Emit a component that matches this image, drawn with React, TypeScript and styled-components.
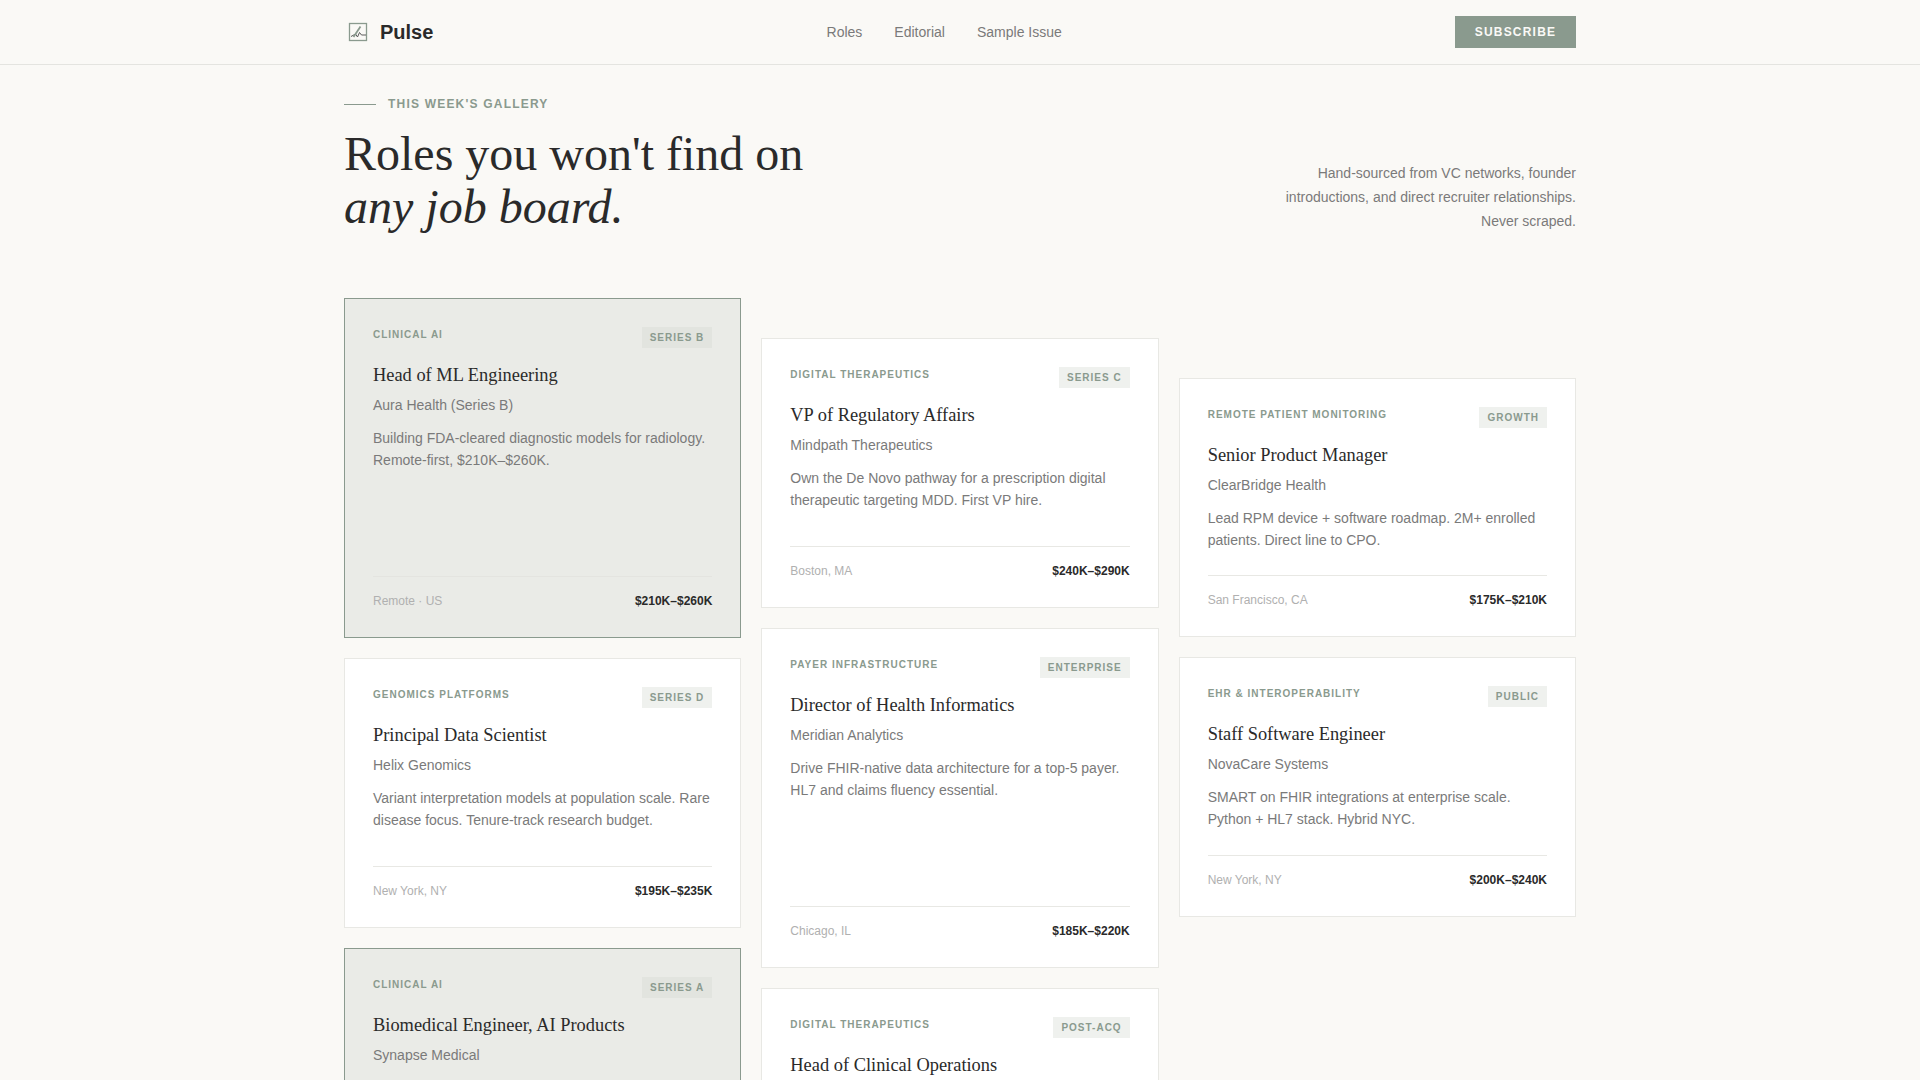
import React from "react";
import styled, { createGlobalStyle } from "styled-components";

const Global = createGlobalStyle`
  html, body { margin: 0; padding: 0; background: #faf9f6; }
  body { font-family: "Liberation Sans", Arial, sans-serif; color: #2a2a2a; }
  * { box-sizing: border-box; }
`;
const Header = styled.header`
  height: 65px;
  border-bottom: 1px solid #e4e4e0;
`;
const HeaderInner = styled.div`
  width: 1232px;
  height: 64px;
  margin: 0 auto;
  display: flex;
  justify-content: space-between;
  align-items: center;
`;
const Brand = styled.div`
  display: flex;
  align-items: center;
  gap: 12px;
  padding-left: 4px;
  font-size: 20px;
  font-weight: 700;
  color: #2a2a2a;
`;
const Nav = styled.nav`
  display: flex;
  gap: 32px;
  font-size: 14px;
  color: #7a7a7a;
`;
const Subscribe = styled.button`
  height: 32px;
  width: 121px;
  border: 0;
  padding: 0;
  background: #8a9a8e;
  color: #faf9f6;
  font: 700 12px "Liberation Sans", Arial, sans-serif;
  letter-spacing: 1.2px;
`;
const Main = styled.main`
  width: 1232px;
  margin: 0 auto;
`;
const Hero = styled.section`
  display: flex;
  justify-content: space-between;
  align-items: flex-end;
  padding-top: 32px;
  margin-bottom: 65px;
`;
const Eyebrow = styled.div`
  display: flex;
  align-items: center;
  gap: 12px;
  font-size: 12px;
  font-weight: 700;
  letter-spacing: 1.2px;
  color: #8a9a8e;
  height: 14px;
  margin-bottom: 16px;
  &::before { content: ""; width: 32px; height: 1px; background: #8a9a8e; }
`;
const Title = styled.h1`
  margin: 0;
  font: 400 48px/53px "Liberation Serif", "Times New Roman", serif;
  color: #2a2a2a;
  em { font-style: italic; }
`;
const Lead = styled.p`
  margin: 0;
  width: 320px;
  text-align: right;
  font-size: 14px;
  line-height: 24px;
  color: #7a7a7a;
`;
const Columns = styled.div`
  display: grid;
  grid-template-columns: repeat(3, 1fr);
  gap: 20px;
  align-items: start;
`;
const Column = styled.div<{ $offset: number }>`
  display: flex;
  flex-direction: column;
  gap: 20px;
  padding-top: ${(p) => p.$offset}px;
`;
const Card = styled.article<{ $featured?: boolean; $height: number }>`
  display: flex;
  flex-direction: column;
  min-height: ${(p) => p.$height}px;
  padding: 28px;
  background: ${(p) => (p.$featured ? "#eaebe7" : "#ffffff")};
  border: 1px solid ${(p) => (p.$featured ? "#8a9a8e" : "#e8e8e4")};
`;
const CardTop = styled.div`
  display: flex;
  justify-content: space-between;
  align-items: flex-start;
  margin-bottom: 16px;
`;
const Category = styled.span`
  font-size: 10px;
  font-weight: 700;
  letter-spacing: 1px;
  line-height: 15px;
  color: #8a9a8e;
`;
const Stage = styled.span<{ $featured?: boolean }>`
  font-size: 10px;
  font-weight: 700;
  letter-spacing: 1px;
  line-height: 13px;
  padding: 4px 8px;
  color: #8a9a8e;
  background: ${(p) => (p.$featured ? "#e2e4df" : "#eff1ee")};
`;
const RoleTitle = styled.h3`
  margin: 0 0 8px;
  font: 400 18.4px/23px "Liberation Serif", "Times New Roman", serif;
  color: #2a2a2a;
`;
const Company = styled.div`
  font-size: 14px;
  line-height: 21px;
  color: #7a7a7a;
  margin-bottom: 11px;
`;
const Desc = styled.p`
  margin: 0;
  flex: 1;
  font-size: 14px;
  line-height: 22.4px;
  color: #7a7a7a;
`;
const Foot = styled.div<{ $featured?: boolean }>`
  display: flex;
  justify-content: space-between;
  align-items: center;
  margin-top: 23px;
  padding-top: 17px;
  border-top: 1px solid ${(p) => (p.$featured ? "#e4e4e0" : "#e8e8e4")};
`;
const Place = styled.span`
  font-size: 12px;
  line-height: 15px;
  color: #b0b0b0;
`;
const Pay = styled.span`
  font-size: 12px;
  line-height: 15px;
  font-weight: 700;
  color: #2a2a2a;
`;

type Job = {
  cat: string; stage: string; title: string; company: string; desc: string;
  place: string; pay: string; featured?: boolean; height: number;
};
const cols: { offset: number; jobs: Job[] }[] = [
  {
    offset: 0,
    jobs: [
      { cat: "CLINICAL AI", stage: "SERIES B", title: "Head of ML Engineering", company: "Aura Health (Series B)", desc: "Building FDA-cleared diagnostic models for radiology. Remote-first, $210K–$260K.", place: "Remote · US", pay: "$210K–$260K", featured: true, height: 340 },
      { cat: "GENOMICS PLATFORMS", stage: "SERIES D", title: "Principal Data Scientist", company: "Helix Genomics", desc: "Variant interpretation models at population scale. Rare disease focus. Tenure-track research budget.", place: "New York, NY", pay: "$195K–$235K", height: 270 },
      { cat: "CLINICAL AI", stage: "SERIES A", title: "Biomedical Engineer, AI Products", company: "Synapse Medical", desc: "Bridge clinical workflows and model development for imaging products.", place: "Remote · US", pay: "$170K–$205K", featured: true, height: 340 },
    ],
  },
  {
    offset: 40,
    jobs: [
      { cat: "DIGITAL THERAPEUTICS", stage: "SERIES C", title: "VP of Regulatory Affairs", company: "Mindpath Therapeutics", desc: "Own the De Novo pathway for a prescription digital therapeutic targeting MDD. First VP hire.", place: "Boston, MA", pay: "$240K–$290K", height: 270 },
      { cat: "PAYER INFRASTRUCTURE", stage: "ENTERPRISE", title: "Director of Health Informatics", company: "Meridian Analytics", desc: "Drive FHIR-native data architecture for a top-5 payer. HL7 and claims fluency essential.", place: "Chicago, IL", pay: "$185K–$220K", height: 340 },
      { cat: "DIGITAL THERAPEUTICS", stage: "POST-ACQ", title: "Head of Clinical Operations", company: "Calmwave", desc: "Run clinical programs across a newly combined product portfolio.", place: "Remote · US", pay: "$190K–$230K", height: 270 },
    ],
  },
  {
    offset: 80,
    jobs: [
      { cat: "REMOTE PATIENT MONITORING", stage: "GROWTH", title: "Senior Product Manager", company: "ClearBridge Health", desc: "Lead RPM device + software roadmap. 2M+ enrolled patients. Direct line to CPO.", place: "San Francisco, CA", pay: "$175K–$210K", height: 259 },
      { cat: "EHR & INTEROPERABILITY", stage: "PUBLIC", title: "Staff Software Engineer", company: "NovaCare Systems", desc: "SMART on FHIR integrations at enterprise scale. Python + HL7 stack. Hybrid NYC.", place: "New York, NY", pay: "$200K–$240K", height: 260 },
    ],
  },
];

const Logo = () => (
  <svg width="20" height="20" viewBox="0 0 20 20" fill="none">
    <rect x="1.5" y="1.5" width="17" height="17" stroke="#8a9a8e" strokeWidth="1.3" />
    <path d="M3 14.5 L7.5 12 L9.5 15 L11.5 10.5 L13.5 13 H18" stroke="#5a5a5a" strokeWidth="1" />
    <path d="M5.5 15 L12.5 4.5" stroke="#8a9a8e" strokeWidth="1.8" />
  </svg>
);

export default function App() {
  return (
    <>
      <Global />
      <Header>
        <HeaderInner>
          <Brand><Logo />Pulse</Brand>
          <Nav><span>Roles</span><span>Editorial</span><span>Sample Issue</span></Nav>
          <Subscribe>SUBSCRIBE</Subscribe>
        </HeaderInner>
      </Header>
      <Main>
        <Hero>
          <div>
            <Eyebrow>THIS WEEK'S GALLERY</Eyebrow>
            <Title>Roles you won't find on<br /><em>any job board.</em></Title>
          </div>
          <Lead>Hand-sourced from VC networks, founder introductions, and direct recruiter relationships. Never scraped.</Lead>
        </Hero>
        <Columns>
          {cols.map((c) => (
            <Column key={c.offset} $offset={c.offset}>
              {c.jobs.map((j) => (
                <Card key={j.title} $featured={j.featured} $height={j.height}>
                  <CardTop><Category>{j.cat}</Category><Stage $featured={j.featured}>{j.stage}</Stage></CardTop>
                  <RoleTitle>{j.title}</RoleTitle>
                  <Company>{j.company}</Company>
                  <Desc>{j.desc}</Desc>
                  <Foot $featured={j.featured}><Place>{j.place}</Place><Pay>{j.pay}</Pay></Foot>
                </Card>
              ))}
            </Column>
          ))}
        </Columns>
      </Main>
    </>
  );
}
